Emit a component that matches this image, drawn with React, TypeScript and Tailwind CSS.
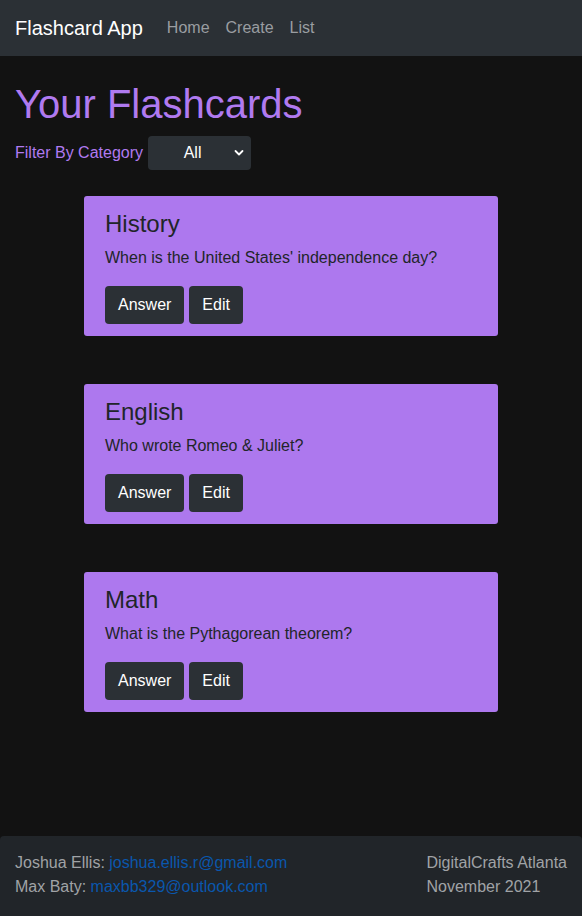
import React from "react";

const cards = [
  { cat: "History", q: "When is the United States' independence day?" },
  { cat: "English", q: "Who wrote Romeo & Juliet?" },
  { cat: "Math", q: "What is the Pythagorean theorem?" },
];

export default function App() {
  return (
    <div
      className="min-h-[916px] flex flex-col bg-[#121212]"
      style={{ fontFamily: '"Liberation Sans", Arial, sans-serif' }}
    >
      <nav className="h-[56px] bg-[#2b3035] flex items-center px-[15px]">
        <span className="text-white text-[20px] mr-[24px]">Flashcard App</span>
        <div className="flex gap-[16px] text-[16px] text-[#9a9da1]">
          <span>Home</span>
          <span>Create</span>
          <span>List</span>
        </div>
      </nav>

      <main className="flex-1 px-[15px] pt-[24px]">
        <h1 className="text-[40px] leading-[48px] text-[#b07af0]">Your Flashcards</h1>
        <div className="flex items-center mt-[8px] gap-[5px]">
          <span className="text-[16px] text-[#b07af0]">Filter By Category</span>
          <div className="relative w-[103px] h-[34px] bg-[#2b3035] rounded-[4px] flex items-center justify-center text-white text-[16px]">
            <span className="mr-[14px]">All</span>
            <svg className="absolute right-[7px] top-[13px]" width="10" height="8" viewBox="0 0 10 8">
              <path d="M1.5 2 L5 5.5 L8.5 2" stroke="white" strokeWidth="1.8" fill="none" strokeLinecap="round" strokeLinejoin="round" />
            </svg>
          </div>
        </div>

        <div className="flex flex-col items-center gap-[48px] mt-[26px]">
          {cards.map((c) => (
            <div
              key={c.cat}
              className="w-[414px] h-[140px] bg-[#ad78ee] rounded-[3px] px-[21px] pt-[13px] text-[#212529]"
            >
              <div className="text-[24px] leading-[29px]">{c.cat}</div>
              <div className="text-[16px] leading-[24px] mt-[8px]">{c.q}</div>
              <div className="flex gap-[5px] mt-[16px]">
                <button className="h-[38px] px-[13px] bg-[#2b3035] text-white text-[16px] rounded-[4px]">Answer</button>
                <button className="h-[38px] px-[13px] bg-[#2b3035] text-white text-[16px] rounded-[4px]">Edit</button>
              </div>
            </div>
          ))}
        </div>
      </main>

      <footer className="h-[80px] bg-[#212529] rounded-t-[4px] flex justify-between px-[15px] pt-[15px] text-[16px] leading-[24px] text-[#a0a3a6]">
        <div>
          <div>
            Joshua Ellis: <span className="text-[#0a57ad]">joshua.ellis.r@gmail.com</span>
          </div>
          <div>
            Max Baty: <span className="text-[#0a57ad]">maxbb329@outlook.com</span>
          </div>
        </div>
        <div>
          <div>DigitalCrafts Atlanta</div>
          <div>November 2021</div>
        </div>
      </footer>
    </div>
  );
}
